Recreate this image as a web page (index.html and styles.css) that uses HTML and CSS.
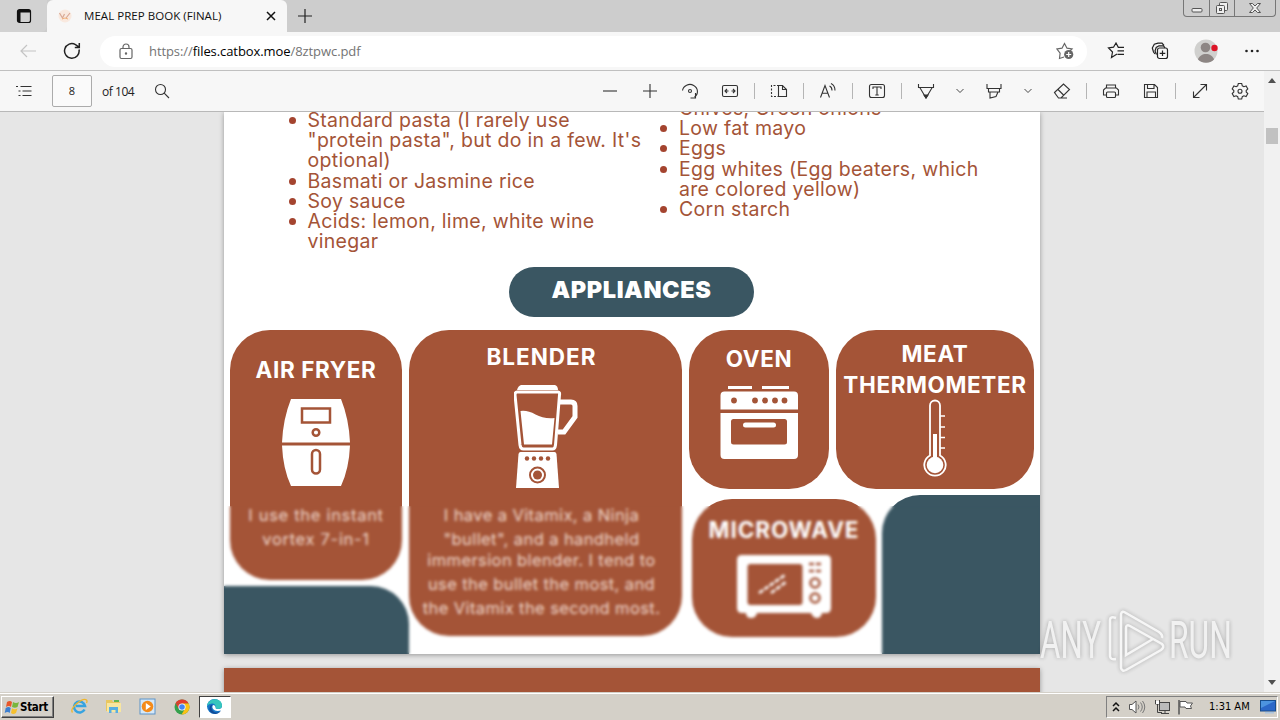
FILE: index.html
```html
<!doctype html>
<html lang="en">
  <head>
    <meta charset="UTF-8" />
    <meta name="viewport" content="width=device-width, initial-scale=1.0" />
    <title>MEAL PREP BOOK (FINAL)</title>
    <link rel="stylesheet" href="styles.css">
  </head>
  <body>
    <header class="tabs">
      <div class="tab-menu">
        <svg width="16" height="16" viewBox="0 0 16 16"><rect x="1.500" y="1.500" width="13" height="13" rx="2" fill="none" stroke="#111" stroke-width="1.200" /><path d="M2 2h12v2.500H2zM2 4h2.500v10H2z" fill="#111" /></svg>
      </div>
      <div class="tab">
        <svg width="16" height="16" viewBox="0 0 16 16"><circle cx="8" cy="8" r="6.500" fill="#f9e9df" /><path d="M2.500 5l3 5 2-4M9 10l4-5" fill="none" stroke="#d9a995" stroke-width="1.200" /><path d="M5 11l3-1 3 1" stroke="#f2b27c" fill="none" /></svg>
        <span class="tab-title">MEAL PREP BOOK (FINAL)</span>
        <svg width="10" height="10" viewBox="0 0 10 10"><path d="M1 1l8 8M9 1l-8 8" stroke="#111" stroke-width="1.500" /></svg>
      </div>
      <svg class="new-tab" width="16" height="16" viewBox="0 0 16 16"><path d="M8 1v14M1 8h14" stroke="#222" stroke-width="1.200" /></svg>
      <div class="window-buttons">
        <span><svg width="14" height="12" viewBox="0 0 14 12"><rect x="2" y="6.500" width="10" height="3.500" rx="1" fill="#eee" stroke="#555" /></svg></span>
        <span><svg width="14" height="14" viewBox="0 0 14 14"><g fill="#eee" stroke="#555"><rect x="4.500" y="1.500" width="8" height="8" rx="1" /><rect x="1.500" y="4.500" width="8" height="8" rx="1" /><rect x="4.500" y="7.500" width="2" height="2" /></g></svg></span>
        <span><svg width="14" height="12" viewBox="0 0 14 12"><path d="M1.500 1.500h3L7 4l2.500-2.500h3L8.700 6l3.800 4.500h-3L7 8l-2.500 2.500h-3L5.300 6z" fill="#eee" stroke="#555" /></svg></span>
      </div>
    </header>

    <nav class="address">
      <svg class="back" width="18" height="14" viewBox="0 0 18 14"><path d="M17 7H2M8 1L2 7l6 6" /></svg>
      <svg class="reload" width="18" height="18" viewBox="0 0 18 18"><path d="M16 7.500A7.300 7.300 0 1 1 12.500 2.600L16 5.200M16.300 1v4.500h-4.500" /></svg>
      <div class="url">
        <svg width="14" height="17" viewBox="0 0 14 17"><rect x="1" y="5.500" width="12" height="10" rx="1.500" /><path d="M4 5.500V4a3 3 0 0 1 6 0v1.500" /><circle cx="7" cy="10.500" r=".6" /></svg>
        <span class="url-text">https://<b>files.catbox.moe</b>/8ztpwc.pdf</span>
        <svg class="star" width="18" height="18" viewBox="0 0 18 18"><path d="M8 15l-4.500 1.500.6-5.300L1 7l5-.8L8.500 1.500 11 6.200l5 .8-2 2" /><circle cx="12.700" cy="12.500" r="4.600" fill="#666" stroke="none" /><path d="M12.700 10v5M10.200 12.500h5" stroke="#fff" /></svg>
      </div>
      <svg width="18" height="18" viewBox="0 0 18 18"><path d="M10 12l-5.500 3.500 1-5.500L1.500 6l5-.8L9 1l2.300 4.300H17M10.500 8.800H17M10.500 12.300H17" /></svg>
      <svg width="18" height="18" viewBox="0 0 18 18"><path d="M4 12L2.500 10 1.300 6l2-3.800L7 1.200h4l2 2.300" /><rect x="6.500" y="6" width="10" height="10.500" rx="2" fill="#f7f7f7" /><path d="M11.500 8.500v5.500M8.700 11.300h5.600M5.500 12.500L4 9l1.200-3.500 2.800-1.700h4.500l1.500 2" /></svg>
      <svg class="avatar" width="24" height="24" viewBox="0 0 24 24"><circle cx="12" cy="12" r="11.500" fill="#d0d0ce" /><circle cx="11.500" cy="8.500" r="4.800" fill="#8d8684" /><path d="M4 20.500c2-7.500 14-7.500 16 0a11.500 11.500 0 0 1-16 0z" fill="#8d8684" /><circle cx="20.500" cy="9" r="3.200" fill="#dc1427" /></svg>
      <svg width="16" height="4" viewBox="0 0 16 4"><g fill="#222" stroke="none"><circle cx="3.500" cy="2" r="1.300" /><circle cx="9" cy="2" r="1.300" /><circle cx="14.500" cy="2" r="1.300" /></g></svg>
    </nav>

    <div class="reader">
      <div class="reader-main">
        <div class="toolbar">
          <svg class="toc" width="18" height="14" viewBox="0 0 18 14"><path d="M5.500 2.500h11M7.500 7h9M7.500 11.500h9M1 2.500h2M3.500 7h2M3.500 11.500h2" /></svg>
          <span class="page-number">8</span>
          <span class="page-count">of 104</span>
          <svg width="16" height="16" viewBox="0 0 16 16"><circle cx="6.500" cy="6.500" r="5" /><path d="M10.200 10.200L15 15" /></svg>
          <div class="tools">
            <span class="tool"><svg width="18" height="18" viewBox="0 0 18 18"><path d="M2 9h14" /></svg></span>
            <span class="tool"><svg width="18" height="18" viewBox="0 0 18 18"><path d="M2 9h14M9 2v14" /></svg></span>
            <span class="tool"><svg width="18" height="18" viewBox="0 0 18 18"><path d="M1.500 8.500A7.500 7 0 1 1 13.500 15M14.500 11v5H9.500" /><circle cx="9" cy="9" r="1.500" /></svg></span>
            <span class="tool"><svg width="18" height="18" viewBox="0 0 18 18"><rect x="1.500" y="3.500" width="15" height="11" rx="1.500" /><path d="M4 9h3.500M10.500 9H14M6 7L4 9l2 2M12 7l2 2-2 2" /></svg></span>
            <i></i>
            <span class="tool"><svg width="18" height="18" viewBox="0 0 18 18"><path d="M9 3.500H1.500v11H9" stroke-dasharray="2 1.500" /><path d="M8.500 3.500h4l4 4v7h-8zM12.500 3.500v4h4" /></svg></span>
            <i></i>
            <span class="tool"><svg width="18" height="18" viewBox="0 0 18 18"><path d="M1.500 15.500L6 3.500l4.500 12M3.200 11.200h5.700M10.500 4q2.500 1 2.500 4.500M12 1.500q4 2 4 7" /></svg></span>
            <i></i>
            <span class="tool"><svg width="18" height="18" viewBox="0 0 18 18"><rect x="1.500" y="2.500" width="15" height="13" rx="2" /><path d="M5 7V5h8v2M9 5v8M7.300 13h3.400" /></svg></span>
            <i></i>
            <span class="tool"><svg width="18" height="18" viewBox="0 0 18 18"><path d="M1.500 2v3.500h15V2M2.800 5.500L9 16l6.200-10.500" /><path d="M7 13h4l-2 3z" fill="#333" /></svg></span>
            <span class="more"><svg width="10" height="6" viewBox="0 0 10 6"><path d="M1.500 1L5 4.500 8.500 1" /></svg></span>
            <span class="tool"><svg width="18" height="18" viewBox="0 0 18 18"><path d="M2 2v4.500h14V2M3.500 6.500V10h11V6.500M5 10v6l6-1.500 2-4.500" /></svg></span>
            <span class="more"><svg width="10" height="6" viewBox="0 0 10 6"><path d="M1.500 1L5 4.500 8.500 1" /></svg></span>
            <span class="tool"><svg width="18" height="18" viewBox="0 0 18 18"><path d="M1.500 10.500l9-8.500 6 5.500-8.500 8.500H5.500zM5 7.500l6 6M7 16h7" /></svg></span>
            <i></i>
            <span class="tool"><svg width="18" height="18" viewBox="0 0 18 18"><path d="M4.500 6V3h9v3M4.500 13h-3V8l2-2h11l2 2v5h-3" /><rect x="4.500" y="10" width="9" height="5.500" rx="1" /></svg></span>
            <span class="tool"><svg width="18" height="18" viewBox="0 0 18 18"><path d="M2.500 2.500h10l3 3v10h-13zM5.500 2.500v4H12v-4M5 15.500V10h8.500v5.500" /></svg></span>
            <i></i>
            <span class="tool"><svg width="18" height="18" viewBox="0 0 18 18"><path d="M2.500 15.500l13-13M9.500 2.500h6v6M2.500 9.500v6h6" /></svg></span>
            <span class="tool"><svg width="18" height="18" viewBox="0 0 18 18"><path d="M7.300 1.500h3.400l.6 2.300 1.600.9 2.200-.7 1.700 3-1.600 1.500v1.500l1.600 1.500-1.700 3-2.200-.7-1.600.9-.6 2.300H7.300l-.6-2.300-1.600-.9-2.200.7-1.700-3L2.800 10V8.500L1.200 7l1.700-3 2.200.7 1.600-.9z" /><circle cx="9" cy="9.200" r="2" /></svg></span>
          </div>
        </div>

        <main class="viewer">
          <section class="sheet">
            <div class="lists">
              <ul>
                <li>Standard pasta (I rarely use<br>"protein pasta", but do in a few. It's<br>optional)</li>
                <li>Basmati or Jasmine rice</li>
                <li>Soy sauce</li>
                <li>Acids: lemon, lime, white wine<br>vinegar</li>
              </ul>
              <ul>
                <li>Chives, Green onions</li>
                <li>Low fat mayo</li>
                <li>Eggs</li>
                <li>Egg whites (Egg beaters, which<br>are colored yellow)</li>
                <li>Corn starch</li>
              </ul>
            </div>

            <h1>APPLIANCES</h1>

            <div class="board">
              <div class="column-fryer">
                <article class="card fryer">
                  <h2>AIR FRYER</h2>
                  <svg width="68" height="87" viewBox="0 0 68 87">
                    <path d="M9 0h50q8 20 9 43.500H0Q1 20 9 0zM0 46.500h68Q67 70 59 87H9Q1 70 0 46.500z" fill="#fff" />
                    <g fill="none" stroke="#a45437" stroke-width="2.500"><rect x="20" y="9.500" width="28" height="14" /><circle cx="34" cy="33.500" r="3.300" /><rect x="30" y="51" width="8" height="23.500" rx="4" /></g>
                  </svg>
                  <p>I use the instant<br>vortex 7-in-1</p>
                </article>
                <div class="patch patch-left"></div>
              </div>

              <article class="card blender">
                <h2>BLENDER</h2>
                <svg width="64" height="104" viewBox="0 0 64 104">
                  <path d="M7 0h34q3 1 3 5H3q1-4 4-5z" fill="#fff" />
                  <path d="M3 7h41q2 0 1.500 3l-4 50q-.5 4-3 4h-29q-3 0-3.500-4l-5-50q0-3 2-3z" fill="none" stroke="#fff" stroke-width="3" />
                  <path d="M6.500 26q7-1 15 3.500t19 3.500L38 59.500H10z" fill="#fff" />
                  <path d="M46 17h11q4 0 4 4v11L50 47h-6" fill="none" stroke="#fff" stroke-width="5" />
                  <path d="M6.500 67h34q1.500 0 2 2L45 103H2L4.500 69q.5-2 2-2z" fill="#fff" />
                  <g fill="#a45437"><circle cx="13" cy="73.500" r="2.200" /><circle cx="20" cy="73.500" r="2.200" /><circle cx="27" cy="73.500" r="2.200" /><circle cx="34" cy="73.500" r="2.200" /><circle cx="23.500" cy="90" r="4.500" /></g>
                  <circle cx="23.500" cy="90" r="7.500" fill="none" stroke="#a45437" stroke-width="2" />
                </svg>
                <p>I have a Vitamix, a Ninja<br>"bullet", and a handheld<br><span>immersion blender. I tend to<br>use the bullet the most, and<br>the Vitamix the second most.</span></p>
              </article>

              <div class="column-rest">
                <div class="row-top">
                  <article class="card oven">
                    <h2>OVEN</h2>
                    <svg width="78" height="74" viewBox="0 0 78 74">
                      <path d="M8 0h24v3H8zM42 0h27v3H42zM4.500 5.500h69.500q4 0 4 4V23.500H.5V9.500q0-4 4-4zM.5 27H78v42q0 4-4 4H4.500q-4 0-4-4z" fill="#fff" />
                      <g fill="#a45437"><circle cx="14" cy="14.500" r="2.900" /><circle cx="35" cy="14.500" r="2.900" /><circle cx="45" cy="14.500" r="2.900" /><circle cx="55" cy="14.500" r="2.900" /><circle cx="64.500" cy="14.500" r="2.900" /><rect x="11" y="33" width="56" height="25.500" rx="2.500" /></g>
                      <rect x="23" y="36.500" width="33" height="5" rx="2.500" fill="#fff" />
                    </svg>
                  </article>
                  <article class="card thermometer">
                    <h2>MEAT<br>THERMOMETER</h2>
                    <svg width="26" height="78" viewBox="0 0 26 78">
                      <path d="M7 56.500V6.500a5 5 0 0 1 10 0v50a10.700 10.700 0 1 1-10 0z" fill="none" stroke="#fff" stroke-width="1.800" />
                      <path d="M10 35h4v24h-4z" fill="#fff" /><circle cx="12" cy="66" r="8.300" fill="#fff" />
                      <path d="M17 17h5M17 28h5M17 38.500h5M17 49h5" stroke="#fff" stroke-width="1.400" />
                    </svg>
                  </article>
                </div>
                <div class="row-bottom">
                  <article class="card microwave">
                    <h2>MICROWAVE</h2>
                    <svg width="94" height="64" viewBox="0 0 94 64">
                      <path d="M5 0h84q5 0 5 5v48q0 5-5 5h-4q-1 5-5 5t-6-5H20q-1 5-6 5t-5-5H5q-5 0-5-5V5q0-5 5-5z" fill="#fff" />
                      <rect x="10.500" y="9" width="55" height="41" rx="3" fill="#a45437" />
                      <path d="M22 38l26-18M34 38l15-11" stroke="#fff" stroke-width="2.600" stroke-dasharray="5 1.500" />
                      <g fill="none" stroke="#a45437" stroke-width="2.500"><path d="M72 9h12M72 16h12" stroke-dasharray="5 2" /><circle cx="78" cy="28" r="4.500" /><circle cx="78" cy="43" r="4.500" /></g>
                    </svg>
                  </article>
                  <div class="patch patch-right"></div>
                </div>
              </div>
            </div>
            <!-- tile still at preview resolution -->
            <div class="preview-tile"></div>
          </section>
          <section class="sheet next-sheet"></section>
        </main>
      </div>

      <div class="scrollbar">
        <svg width="8" height="5" viewBox="0 0 8 5"><path d="M0 5l4-5 4 5z" fill="#505050" /></svg>
        <span class="thumb"></span>
        <svg width="8" height="5" viewBox="0 0 8 5"><path d="M0 0l4 5 4-5z" fill="#505050" /></svg>
      </div>
    </div>

    <footer class="taskbar">
      <div class="start">
        <svg width="16" height="16" viewBox="0 0 16 16"><path d="M3 3q3-2 5 0L7 8q-2-2-5 0z" fill="#e8572a" /><path d="M9 3q3 2 6 0l-1.500 5Q11 9.500 8 8z" fill="#79b63c" /><path d="M1.700 9q3-2 5 0l-1 5q-2-2-5 0z" fill="#3d7fd0" /><path d="M8 9.300q3 2 5.500 0L12 14q-3 2-5 0z" fill="#f6c02d" /></svg>
        Start
      </div>
      <div class="quick">
        <span><svg width="17" height="17" viewBox="0 0 17 17"><path d="M13.500 11.500A5.500 5.500 0 1 1 14 8H5" fill="none" stroke="#36a3e0" stroke-width="2.600" /><path d="M1.500 14.500C-2 10 12-1 15.500 2q1 1 0 3" fill="none" stroke="#efb62c" stroke-width="1.300" /></svg></span>
        <span><svg width="17" height="17" viewBox="0 0 17 17"><path d="M1 2h6l1 2h7v9H1z" fill="#e9c760" /><path d="M2 5h14v9H2z" fill="#f8e6a0" /><path d="M4 15V9h9v6h-2.500v-3h-4v3z" fill="#58aee2" /><path d="M9 2h5v2H9z" fill="#61b552" /></svg></span>
        <span><svg width="17" height="17" viewBox="0 0 17 17"><rect x="1" y="1" width="15" height="15" fill="#d5e8f8" stroke="#5d93c8" /><circle cx="8.500" cy="8.500" r="5.800" fill="#f48b1a" /><path d="M6.800 5l5 3.500-5 3.500z" fill="#fff" /></svg></span>
        <span><svg width="16" height="16" viewBox="0 0 16 16"><circle cx="8" cy="8" r="7.500" fill="#34a04c" /><path d="M1.500 4.200A7.500 7.500 0 0 1 14.600 4.500L8 5z" fill="#e33b2e" /><path d="M1.500 4.200L5 10l3-5z" fill="#e33b2e" /><path d="M14.600 4.500A7.500 7.500 0 0 1 7.500 15.500L11.500 9 8 4.500z" fill="#fbc116" /><circle cx="8" cy="8" r="3.600" fill="#fff" /><circle cx="8" cy="8" r="2.800" fill="#4285f4" /></svg></span>
        <span class="active"><svg width="17" height="17" viewBox="0 0 17 17"><circle cx="8.500" cy="8.500" r="7.500" fill="#1677c8" /><path d="M1 8C2-1 16-1 16 7.500q0 3.500-4 3.500-3 0-2.500-2Q10 6 7 5.500 3 5 1 8z" fill="#36c6bd" /><path d="M6.500 6.500Q4 10 7 13t8 0q-3 4-8 2.500T4 8q1-1.500 2.500-1.500z" fill="#124a97" /><path d="M7 7q2 0 2.500 2-.5 2 2.500 2 3.500 0 4-2v3q-6 2.500-9-1-1.500-2 0-4z" fill="#fff" /></svg></span>
      </div>
      <div class="tray">
        <svg width="8" height="12" viewBox="0 0 8 12"><path d="M1 5l3-3 3 3M1 10l3-3 3 3" fill="none" stroke="#111" stroke-width="1.500" /></svg>
        <svg width="18" height="16" viewBox="0 0 18 16"><path d="M1.500 5.500H4L8 2v12l-4-3.500H1.500z" fill="#fff" stroke="#555" /><path d="M10 5.500q2 2.500 0 5M12.500 3.500q3.500 4.500 0 9M14.500 2q4.500 6 0 12" fill="none" stroke="#777" /></svg>
        <svg width="17" height="16" viewBox="0 0 17 16"><rect x="5.500" y="3.500" width="10" height="8" fill="#bbb" stroke="#444" /><path d="M7 14.500h8M11 12v2M1.500 1v4h4V1M3.500 5v8.500H8" fill="none" stroke="#444" /><path d="M2 2h3v3H2z" fill="#fff" /></svg>
        <svg width="17" height="16" viewBox="0 0 17 16"><path d="M2 1v14.500" stroke="#555" stroke-width="1.500" /><path d="M3 2.500h6l1 1.500h5.500l-2 3 1 2.500H9L8 8H3z" fill="#fff" stroke="#555" /></svg>
        <time>1:31 AM</time>
        <svg width="16" height="14" viewBox="0 0 16 14"><rect x=".5" y=".5" width="15" height="10.500" fill="#2c68c8" stroke="#174d8d" /><path d="M1 1h14L1 8z" fill="#4d94e0" /><path d="M5 12h9v1.500H5z" fill="#aac4df" /></svg>
      </div>
    </footer>

    <svg class="watermark" width="196" height="66" viewBox="0 0 196 66">
      <g class="watermark-text">
        <text x="1" y="49" textLength="61" lengthAdjust="spacingAndGlyphs">ANY</text>
        <text x="130" y="49" textLength="63" lengthAdjust="spacingAndGlyphs">RUN</text>
      </g>
      <path d="M77 50q-6 1-6-3V11q0-4 6-2M82 50V5q1-4 5-1l33 19q4 3 3 6M87 19v27M82 50v9q1 4 5 2l35-20q4-3 1-6l-32-18q-4-2-4 2v27l27-16" />
    </svg>
  </body>
</html>
```
FILE: styles.css
```css
:root {
  --rust: #a45437;
  --teal: #3a5662;
  --chrome: #f7f7f7;
}

* {
  box-sizing: border-box;
}

body {
  display: flex;
  flex-direction: column;
  height: 720px;
  margin: 0;
  overflow: hidden;
  font-family: "Open Sans", sans-serif;
  font-size: 12px;
  color: #222;
}

svg {
  display: block;
  flex: none;
}

/* tab strip */

.tabs {
  display: flex;
  align-items: center;
  height: 32px;
  background: #cdcdcd;
}

.tab-menu {
  display: flex;
  align-items: center;
  width: 47px;
  height: 32px;
  padding-left: 16px;
  background: #d2d2d2;
  border-bottom-right-radius: 6px;
}

.tab {
  display: flex;
  align-items: center;
  width: 240px;
  height: 32px;
  padding: 0 11px 0 10px;
  background: var(--chrome);
  border-radius: 6px 6px 0 0;
}

.tab-title {
  flex: 1;
  margin: -1px 0 0 11px;
  font-size: 11.5px;
  letter-spacing: 0.04px;
  white-space: nowrap;
  color: #111;
}

.new-tab {
  margin-left: 10px;
}

.window-buttons {
  display: flex;
  align-self: flex-start;
  height: 17px;
  margin-left: auto;
  margin-right: 4px;
  border: 1px solid #777;
  border-top: 0;
  border-radius: 0 0 4px 4px;
}

.window-buttons span {
  display: flex;
  align-items: center;
  justify-content: center;
  width: 25px;
}

.window-buttons span + span {
  border-left: 1px solid #777;
}

.window-buttons span:last-child {
  width: 41px;
}

/* address bar */

.address {
  display: flex;
  align-items: center;
  height: 39px;
  padding: 0 21px 0 19px;
  background: var(--chrome);
  border-bottom: 1px solid #c0c0c0;
}

.address svg {
  fill: none;
  stroke: #222;
  stroke-width: 1.2;
  margin-right: 26px;
}

.address .back {
  stroke: #c4c4c4;
}

.address svg.reload {
  margin-right: 19px;
  stroke-width: 1.5;
}

.url {
  display: flex;
  align-items: center;
  width: 988px;
  height: 31px;
  margin-right: 20px;
  padding: 0 13px 0 19px;
  background: #fff;
  border-radius: 16px;
}

.url svg {
  margin: 0;
  stroke: #666;
}

.url-text {
  flex: 1;
  margin-left: 16px;
  font-size: 13px;
  letter-spacing: -0.08px;
  color: #747474;
}

.url-text b {
  font-weight: 400;
  color: #000;
}

.address svg.avatar {
  margin: 0 25px 0 -1px;
  stroke: none;
}

.address > svg:last-child {
  margin: 0;
}

/* pdf reader */

.reader {
  display: flex;
  height: 621px;
}

.reader-main {
  width: 1264px;
}

.toolbar {
  display: flex;
  align-items: center;
  height: 41px;
  padding-left: 15px;
  background: var(--chrome);
  border-bottom: 1px solid #b8b8b8;
}

.toolbar svg {
  fill: none;
  stroke: #333;
  stroke-width: 1.1;
}

.page-number {
  width: 40px;
  height: 32px;
  margin: 0 10px 0 19px;
  border: 1px solid #ababab;
  border-radius: 2px;
  background: #fafafa;
  line-height: 30px;
  text-align: center;
  font-size: 11px;
}

.page-count {
  width: 52px;
  font-size: 12px;
  letter-spacing: -0.45px;
}

.tools {
  display: flex;
  align-items: center;
  margin-left: auto;
  margin-right: 4px;
}

.tool,
.more {
  display: flex;
  justify-content: center;
  width: 40px;
}

.more {
  width: 28px;
}

.tools .more svg {
  stroke-width: 0.9;
}

.tools i {
  width: 1px;
  height: 16px;
  margin: 0 4px;
  background: #b5b5b5;
}

.viewer {
  height: 580px;
  overflow: hidden;
  background: #e6e6e6;
}

.scrollbar {
  display: flex;
  flex-direction: column;
  align-items: center;
  width: 16px;
  padding: 7px 0;
  background: #f1f1f1;
}

.thumb {
  width: 12px;
  height: 16px;
  margin-top: 45px;
  margin-bottom: auto;
  background: #c1c1c1;
}

/* document */

.sheet {
  position: relative;
  width: 816px;
  height: 542px;
  margin: 0 auto 14px 224px;
  background: #fff;
  box-shadow: 0 1px 5px rgba(0, 0, 0, 0.35);
  font-family: Inter, sans-serif;
}

.next-sheet {
  background: var(--rust);
}

.lists {
  display: flex;
  height: 155px;
}

.lists ul {
  width: 371.5px;
  margin: -2px 0 0;
  padding-left: 83.5px;
  list-style: none;
  font-size: 19.5px;
  font-weight: 400;
  line-height: 20.2px;
  letter-spacing: 0.3px;
  white-space: nowrap;
  color: var(--rust);
}

.lists ul + ul {
  margin-top: -14px;
}

.lists li::before {
  content: "";
  float: left;
  width: 7px;
  height: 7px;
  margin: 7px 0 0 -19px;
  border-radius: 50%;
  background: #a4442f;
}

h1 {
  width: 245px;
  height: 50px;
  margin: 0 0 12.5px 285px;
  border-radius: 25px;
  background: var(--teal);
  color: #fff;
  font-size: 23.5px;
  font-weight: 900;
  line-height: 46px;
  letter-spacing: 0.6px;
  text-align: center;
}

.board {
  display: flex;
  gap: 7px;
  height: 324px;
}

.column-fryer {
  display: flex;
  flex-direction: column;
  gap: 6px;
  width: 178px;
}

.card {
  display: flex;
  flex-direction: column;
  align-items: center;
  border-radius: 40px;
  background: var(--rust);
  color: #fff;
}

.card h2 {
  margin: -1px 0 1px;
  font-size: 22.5px;
  font-weight: 750;
  line-height: 31px;
  letter-spacing: 0.6px;
  text-align: center;
  white-space: nowrap;
}

.card p {
  margin: 17px 0 0;
  font-size: 16.5px;
  line-height: 24px;
  letter-spacing: 0.4px;
  text-align: center;
  white-space: nowrap;
  color: #f0d8cd;
}

.fryer {
  height: 250.5px;
  margin-left: 6px;
  padding-top: 25px;
}

.fryer svg {
  margin-top: 13px;
}

.fryer p {
  letter-spacing: 0.7px;
}

.patch {
  background: var(--teal);
}

.patch-left {
  width: 185px;
  height: 68px;
  border-top-right-radius: 38px;
}

.blender {
  width: 273px;
  height: 306px;
  padding: 12px 8px 0 0;
}

.blender h2 {
  letter-spacing: 1px;
}

.blender svg {
  margin: 12px 0 0 8px;
}

.blender p {
  margin-top: 14px;
}

.blender p span {
  display: block;
  margin-top: -3px;
}

.column-rest {
  flex: 1;
}

.row-top {
  display: flex;
  gap: 7px;
}

.oven {
  width: 140px;
  height: 159px;
  padding-top: 14px;
}

.oven svg {
  margin-top: 11px;
}

.thermometer {
  width: 198px;
  height: 159px;
  padding-top: 9px;
}

.thermometer svg {
  margin: -2px 0 0 2px;
}

.row-bottom {
  display: flex;
  justify-content: space-between;
  margin-top: 6px;
  padding-left: 3px;
}

.microwave {
  width: 184px;
  height: 138px;
  margin-top: 4px;
  padding-top: 16px;
}

.microwave h2 {
  letter-spacing: 0.9px;
}

.microwave svg {
  margin-top: 9px;
}

.patch-right {
  width: 158px;
  height: 159.5px;
  border-top-left-radius: 38px;
}

.preview-tile {
  position: absolute;
  inset: 394px 0 0;
  backdrop-filter: blur(1.7px);
}

/* taskbar */

.taskbar {
  display: flex;
  align-items: center;
  height: 28px;
  border-top: 1px solid #d4d0c8;
  box-shadow: inset 0 1px #fff;
  background: #d4d0c8;
  font-family: "DejaVu Sans Condensed", sans-serif;
  font-size: 11px;
  color: #000;
}

.start {
  display: flex;
  align-items: center;
  width: 53px;
  height: 22px;
  margin-left: 1px;
  padding-left: 2px;
  border: 1px solid;
  border-color: #fff #404040 #404040 #fff;
  box-shadow: inset -1px -1px #808080;
  font-size: 11.5px;
  font-weight: 700;
  letter-spacing: -0.3px;
}

.quick {
  display: flex;
  margin-left: 8.5px;
}

.quick span {
  display: flex;
  align-items: center;
  justify-content: center;
  width: 34px;
  height: 22px;
}

.quick .active {
  width: 32px;
  border: 1px solid;
  border-color: #404040 #fff #fff #404040;
  background: #fff;
}

.tray {
  display: flex;
  align-items: center;
  width: 172px;
  height: 22px;
  margin-left: auto;
  margin-right: 2px;
  padding-left: 5px;
  border: 1px solid;
  border-color: #808080 #fff #fff #808080;
}

.tray svg + svg {
  margin-left: 8px;
}

.tray svg:nth-child(4) {
  margin-left: 6px;
}

.tray time {
  width: 51px;
  margin-left: 15px;
  white-space: nowrap;
}

.watermark {
  position: absolute;
  left: 1039px;
  top: 609px;
  fill: none;
  stroke: #fafafa;
  stroke-width: 2.5;
  opacity: 0.8;
  filter: drop-shadow(0 0 2px rgba(0, 0, 0, 0.35));
}

.watermark-text {
  fill: #f4f4f4;
  stroke: none;
  font-family: Roboto, sans-serif;
  font-size: 51px;
}
```
